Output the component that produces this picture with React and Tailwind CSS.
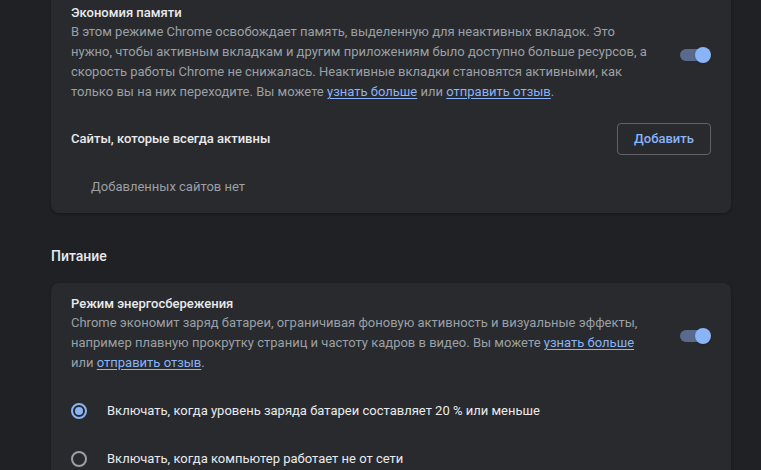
import React from "react";

const Link = ({ children }) => (
  <a href="#" className="text-[#8ab4f8] underline underline-offset-2">
    {children}
  </a>
);

const Toggle = () => (
  <div className="relative w-[31px] h-4 flex-none mt-1">
    <div className="absolute left-0 top-[2px] w-[28px] h-3 rounded-full bg-[#5a6a8c]"></div>
    <div className="absolute right-0 top-0 w-4 h-4 rounded-full bg-[#8ab4f8] shadow"></div>
  </div>
);

const Radio = ({ checked }) => (
  <div
    className={
      checked
        ? "w-4 h-4 rounded-full border-2 border-[#8ab4f8] flex items-center justify-center flex-none"
        : "w-4 h-4 rounded-full border-2 border-[#9aa0a6] flex-none"
    }
  >
    {checked && <div className="w-2 h-2 rounded-full bg-[#8ab4f8]"></div>}
  </div>
);

export default function App() {
  return (
    <div
      className="min-h-[470px] bg-[#202124] text-[13px] overflow-hidden"
      style={{ fontFamily: "Roboto, 'Liberation Sans', sans-serif" }}
    >
      <div className="w-[680px] ml-[51px]">
        {/* Memory saver card */}
        <div className="-mt-4 pt-[20px] pb-[16px] bg-[#292a2d] rounded-lg shadow-[0_1px_3px_rgba(0,0,0,0.3)]">
          <div className="flex items-center px-5">
            <div className="w-[584px] flex-none">
              <div className="text-[#e8eaed] font-medium leading-[18px]">
                Экономия памяти
              </div>
              <div className="text-[#9aa0a6] leading-[20px]">
                В этом режиме Chrome освобождает память, выделенную для
                неактивных вкладок. Это нужно, чтобы активным вкладкам и другим
                приложениям было доступно больше ресурсов, а скорость работы
                Chrome не снижалась. Неактивные вкладки становятся активными, как
                только вы на них переходите. Вы можете <Link>узнать больше</Link>{" "}
                или <Link>отправить отзыв</Link>.
              </div>
            </div>
            <div className="flex-1"></div>
            <Toggle />
          </div>

          <div className="mt-[13px] h-12 flex items-center justify-between px-5">
            <span className="text-[#e8eaed] font-medium leading-[20px]">
              Сайты, которые всегда активны
            </span>
            <button className="w-[94px] h-[32px] rounded border border-[#5f6368] text-[#8ab4f8] font-medium">
              Добавить
            </button>
          </div>

          <div className="mt-[14px] pl-10 text-[#9aa0a6] leading-[20px]">
            Добавленных сайтов нет
          </div>
        </div>

        {/* Power section */}
        <div className="mt-[33px] text-[#e8eaed] text-[14px] font-medium leading-[20px]">
          Питание
        </div>

        <div className="mt-[17px] pt-3 pb-4 bg-[#292a2d] rounded-lg shadow-[0_1px_3px_rgba(0,0,0,0.3)]">
          <div className="flex items-center px-5">
            <div className="w-[584px] flex-none">
              <div className="text-[#e8eaed] font-medium leading-[18px]">
                Режим энергосбережения
              </div>
              <div className="text-[#9aa0a6] leading-[20px]">
                Chrome экономит заряд батареи, ограничивая фоновую активность и
                визуальные эффекты, например плавную прокрутку страниц и частоту
                кадров в видео. Вы можете <Link>узнать больше</Link> или{" "}
                <Link>отправить отзыв</Link>.
              </div>
            </div>
            <div className="flex-1"></div>
            <Toggle />
          </div>

          <div className="mt-[14px] px-5">
            <div className="h-12 flex items-center gap-5">
              <Radio checked />
              <span className="text-[#e8eaed] leading-[20px]">
                Включать, когда уровень заряда батареи составляет 20 % или меньше
              </span>
            </div>
            <div className="h-12 flex items-center gap-5">
              <Radio />
              <span className="text-[#e8eaed] leading-[20px]">
                Включать, когда компьютер работает не от сети
              </span>
            </div>
          </div>
        </div>
      </div>
    </div>
  );
}
